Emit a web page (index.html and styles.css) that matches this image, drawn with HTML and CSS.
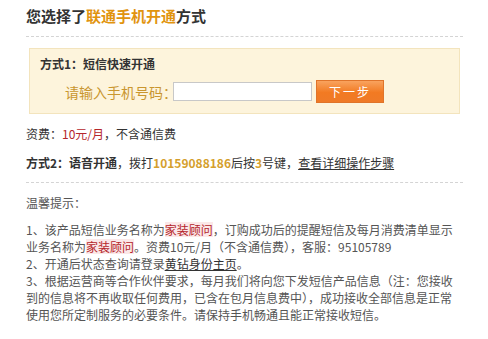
FILE: index.html
```html
<!DOCTYPE html>
<html lang="zh-CN">
<head>
    <meta charset="UTF-8">
    <title>联通手机开通方式</title>
    <link rel="stylesheet" href="styles.css">
</head>
<body>
    <div class="wrap">
        <h2 class="title">您选择了<span class="hl">联通手机开通</span>方式</h2>

        <div class="way1">
            <div class="way1-head">方式1：短信快速开通</div>
            <div class="way1-form">
                <label class="phone-label">请输入手机号码<span class="colon">：</span></label>
                <input type="text" class="phone-input">
                <button class="next-btn">下一步</button>
            </div>
        </div>

        <p class="fee">资费：<span class="red">10元/月</span>，不含通信费</p>

        <p class="way2"><b>方式2：语音开通</b>，拨打<b class="gold">10159088186</b>后按<b class="gold">3</b>号键，<a href="#">查看详细操作步骤</a></p>

        <div class="tips">
            <p class="tips-head">温馨提示：</p>
            <p>1、该产品短信业务名称为<span class="red-bg">家装顾问</span>，订购成功后的提醒短信及每月消费清单显示业务名称为<span class="red-bg">家装顾问</span>。资费10元/月（不含通信费），客服：95105789</p>
            <p>2、开通后状态查询请登录<a href="#">黄钻身份主页</a>。</p>
            <p>3、根据运营商等合作伙伴要求，每月我们将向您下发短信产品信息（注：您接收到的信息将不再收取任何费用，已含在包月信息费中），成功接收全部信息是正常使用您所定制服务的必要条件。请保持手机畅通且能正常接收短信。</p>
        </div>
    </div>
</body>
</html>
```

FILE: styles.css
```css
body {
    margin: 0;
    padding: 0;
    background: #fff;
    font-family: "Noto Sans CJK SC", "Liberation Sans", sans-serif;
    font-size: 12px;
    color: #333;
}

p {
    margin: 0;
}

.wrap {
    width: 437px;
    padding: 6px 0 0 26px;
}

.title {
    margin: 0;
    font-size: 15px;
    line-height: 20px;
    font-weight: bold;
    color: #333;
    padding-bottom: 10px;
    border-bottom: 1px dashed #d4d4d4;
}

.title .hl {
    color: #e1940f;
}

/* 方式1 */
.way1 {
    margin: 11px 3px 0 3px;
    background: #fdf4dc;
    border: 1px solid #f3e4bd;
    padding: 6px 0 10px 10px;
}

.way1-head {
    font-weight: bold;
    line-height: 18px;
    color: #333;
}

.way1-form {
    display: flex;
    align-items: center;
    height: 23px;
    margin-top: 7px;
    padding-left: 25px;
}

.phone-label {
    font-size: 14px;
    color: #c9962f;
    line-height: 20px;
}

.phone-label .colon {
    display: inline-block;
    width: 8px;
}

.phone-input {
    width: 137px;
    height: 17px;
    margin: 0 0 0 2px;
    padding: 0;
    border: 1px solid #c8c8c8;
    background: #fff;
}

.next-btn {
    margin-left: 4px;
    width: 68px;
    height: 23px;
    padding: 0;
    border: 1px solid #e0742a;
    background: linear-gradient(#f9a35e, #f27a22 55%, #ef7a28);
    color: #fff;
    font-family: inherit;
    font-size: 12px;
    letter-spacing: 2px;
    cursor: pointer;
}

.fee {
    margin-top: 11px;
    line-height: 18px;
}

.red {
    color: #b5262b;
}

.way2 {
    margin-top: 11px;
    line-height: 18px;
    padding-bottom: 10px;
    border-bottom: 1px dashed #d4d4d4;
}

.way2 b {
    font-weight: bold;
}

.gold {
    color: #d59f2d;
}

.way2 a,
.tips a {
    color: #333;
    text-decoration: underline;
}

/* 温馨提示 */
.tips {
    color: #555;
    line-height: 17px;
}

.tips-head {
    margin: 11px 0 10px;
}

.red-bg {
    display: inline-block;
    height: 15px;
    line-height: 15px;
    vertical-align: top;
    margin-top: 1px;
    color: #b5262b;
    background: #fbe8e8;
}
```
